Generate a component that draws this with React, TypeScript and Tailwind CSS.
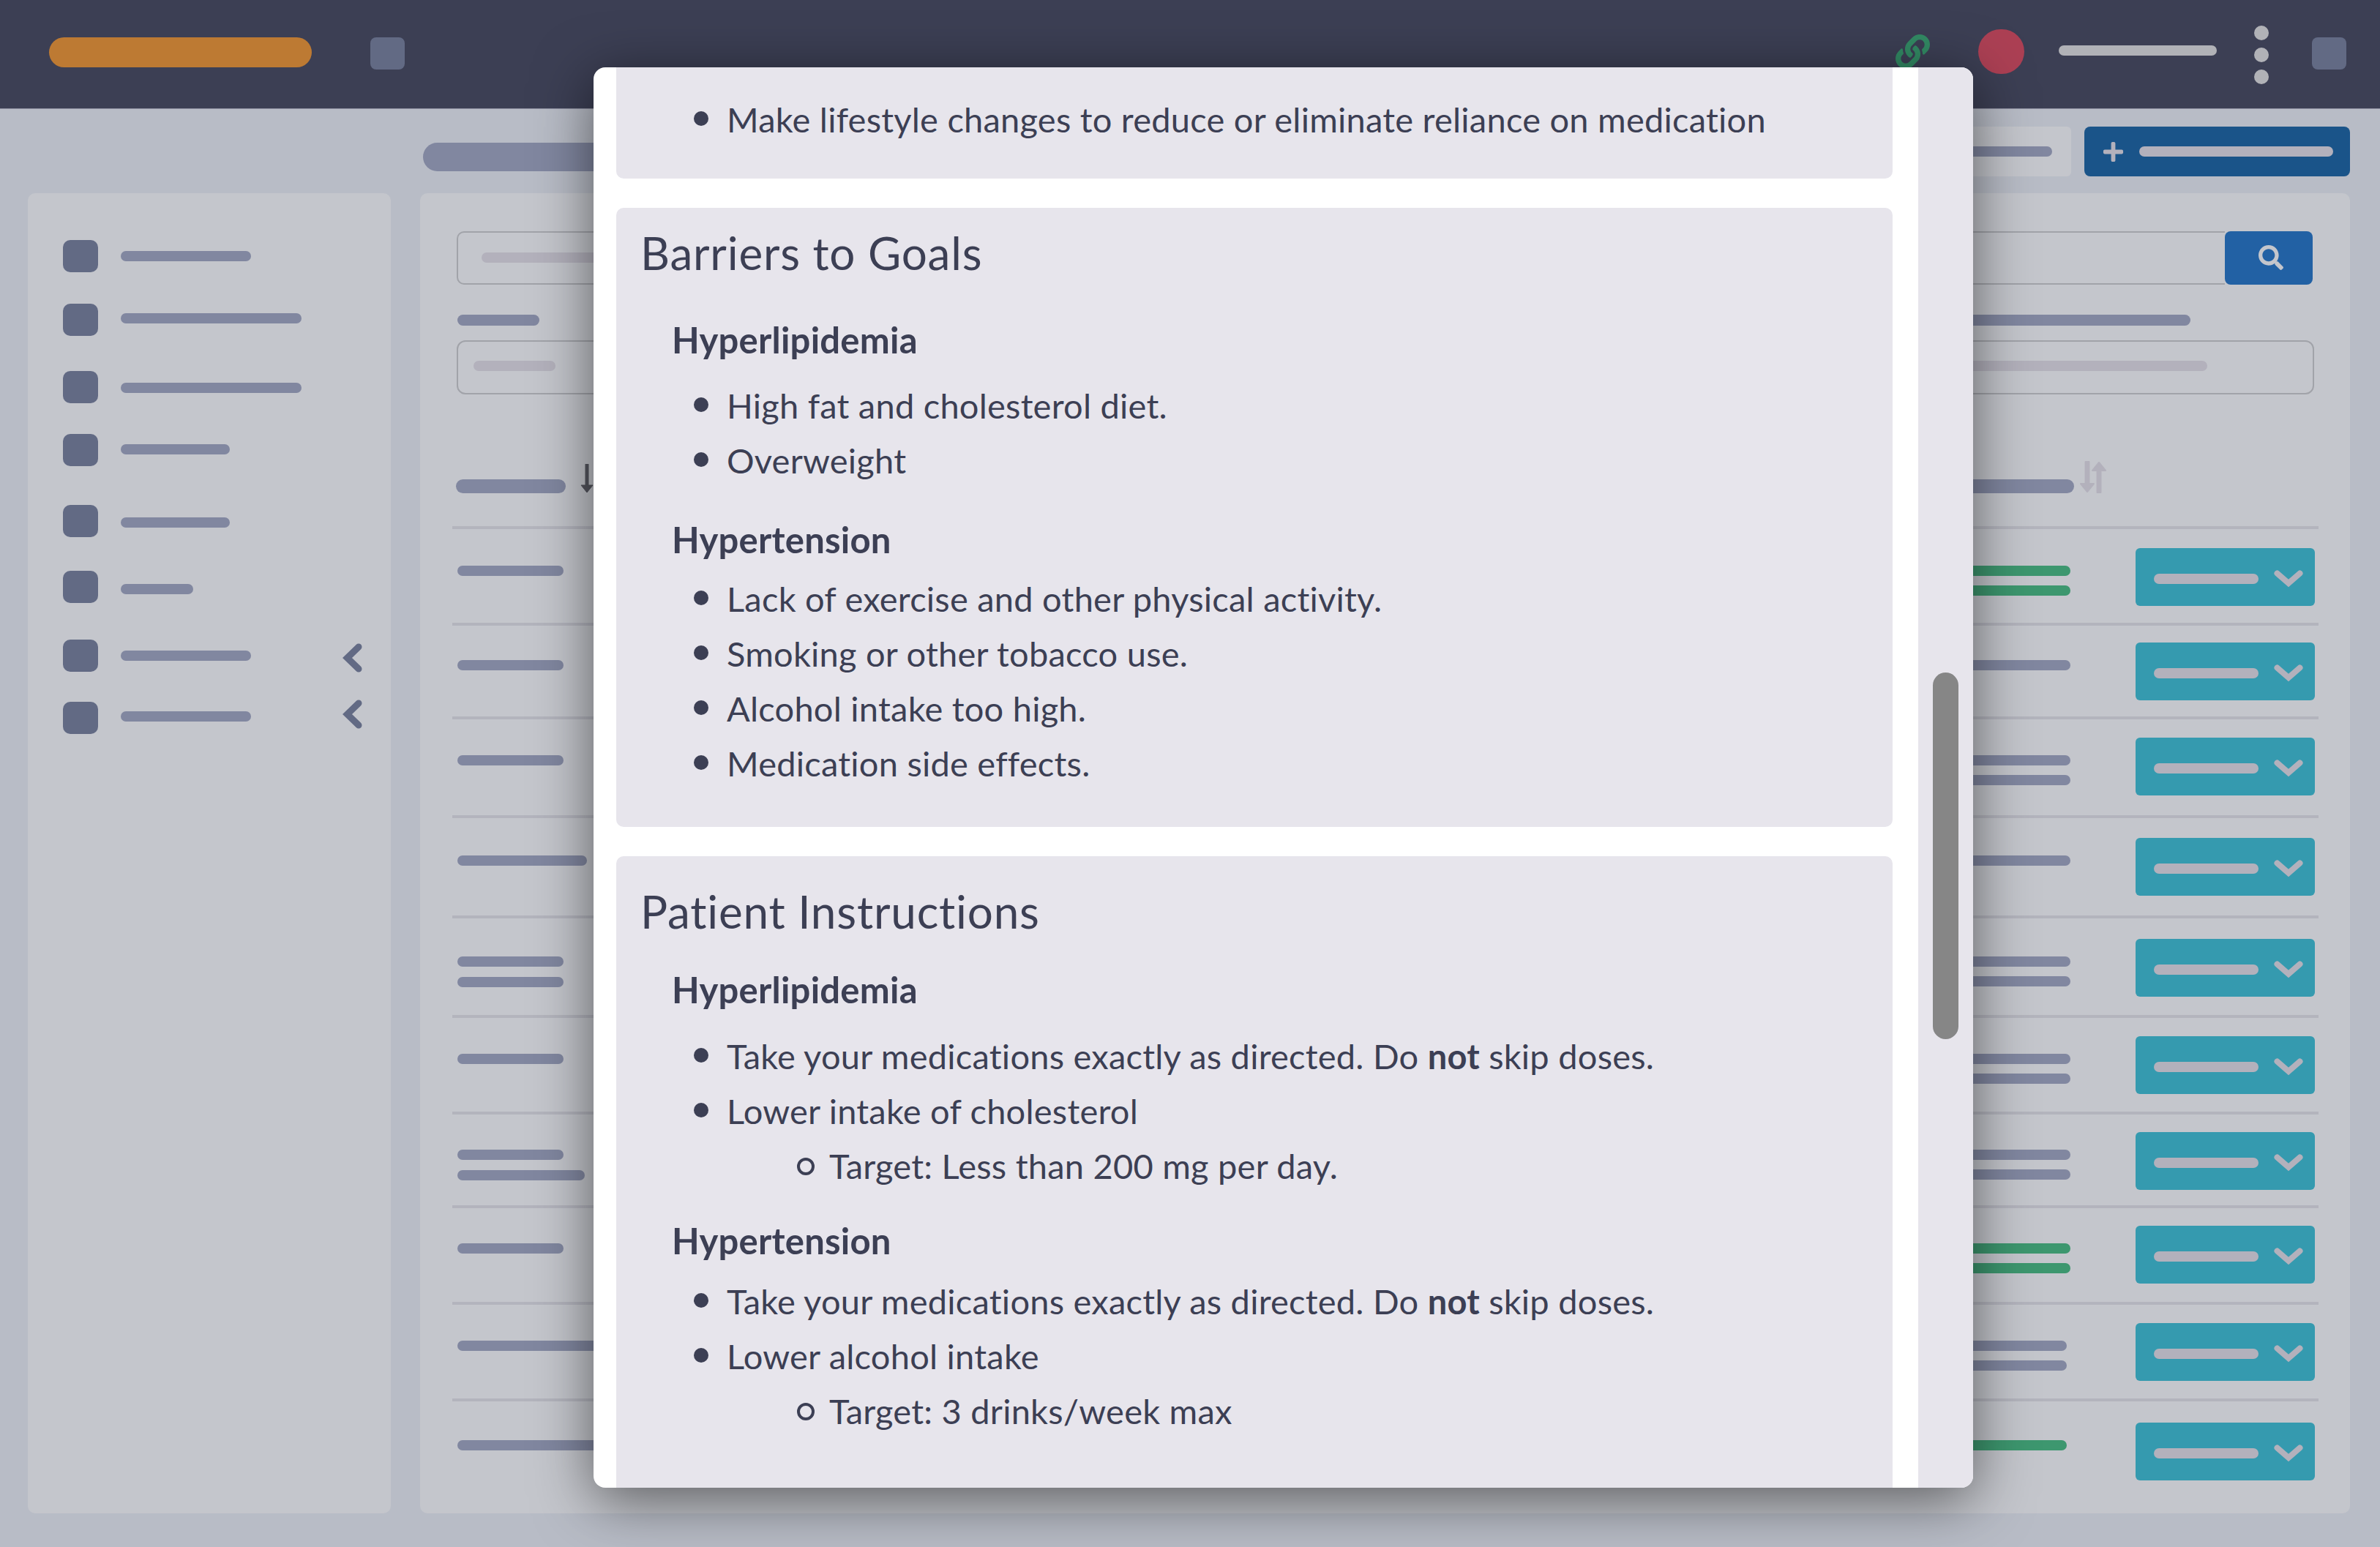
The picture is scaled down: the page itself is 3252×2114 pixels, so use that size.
import React from "react";
import { FaLink, FaSearch, FaPlus } from "react-icons/fa";

const navItems = [
  { row: "h-[87px]", bar: "w-[178px] mt-[15px]", chevron: "" },
  { row: "h-[92px]", bar: "w-[247px] mt-[13px]", chevron: "" },
  { row: "h-[86px]", bar: "w-[247px] mt-[16px]", chevron: "" },
  { row: "h-[97px]", bar: "w-[149px] mt-[14px]", chevron: "" },
  { row: "h-[90px]", bar: "w-[149px] mt-[17px]", chevron: "" },
  { row: "h-[94px]", bar: "w-[99px] mt-[18px]", chevron: "" },
  { row: "h-[85px]", bar: "w-[178px] mt-[15px]", chevron: "mt-[5px]" },
  { row: "h-[85px]", bar: "w-[178px] mt-[13px]", chevron: "-mt-[3px]" },
];

const tableRows = [
  { row: "h-[132px] pt-[26px]", left: ["w-[145px]"], right: ["w-[229px]", "w-[229px]"], green: true },
  { row: "h-[128px] pt-[23px]", left: ["w-[145px]"], right: ["w-[229px]"], green: false },
  { row: "h-[135px] pt-[25px]", left: ["w-[145px]"], right: ["w-[229px]", "w-[229px]"], green: false },
  { row: "h-[137px] pt-[27px]", left: ["w-[177px]"], right: ["w-[229px]"], green: false },
  { row: "h-[136px] pt-[28px]", left: ["w-[145px]", "w-[145px]"], right: ["w-[229px]", "w-[229px]"], green: false },
  { row: "h-[132px] pt-[25px]", left: ["w-[145px]"], right: ["w-[229px]", "w-[229px]"], green: false },
  { row: "h-[128px] pt-[24px]", left: ["w-[145px]", "w-[174px]"], right: ["w-[229px]", "w-[229px]"], green: false },
  { row: "h-[132px] pt-[24px]", left: ["w-[145px]"], right: ["w-[229px]", "w-[229px]"], green: true },
  { row: "h-[132px] pt-[25px]", left: ["w-[240px]"], right: ["w-[224px]", "w-[224px]"], green: false },
  { row: "h-[146px] pt-[29px]", left: ["w-[240px]"], right: ["w-[224px]"], green: true },
];

function Item({ children }: { children: React.ReactNode }) {
  return (
    <li className="flex items-center h-[75px] ml-[106px]">
      <span className="w-[20px] h-[20px] rounded-full bg-[#3c3f54] mr-[25px] -mt-[3px]" />
      <span>{children}</span>
    </li>
  );
}

function SubItem({ children }: { children: React.ReactNode }) {
  return (
    <li className="flex items-center h-[75px] ml-[247px]">
      <span className="w-[24px] h-[24px] rounded-full border-[4px] border-[#3c3f54] mr-[20px] mt-[2px]" />
      <span>{children}</span>
    </li>
  );
}

function CardTitle({ children }: { children: React.ReactNode }) {
  return <h4 className="ml-[33px] h-[91px] leading-[91px] text-[62px] font-normal tracking-[0.8px]">{children}</h4>;
}

function GroupTitle({ children, className }: { children: React.ReactNode; className: string }) {
  return <h5 className={`ml-[76px] h-[75px] leading-[75px] font-bold text-[49px] ${className}`}>{children}</h5>;
}

function ChevronLeft({ className }: { className: string }) {
  return (
    <svg viewBox="0 0 27 40" className={`ml-auto w-[27px] h-[40px] text-[#626a84] ${className}`} fill="none" stroke="currentColor">
      <path d="M22 5L6.5 20L22 35" strokeWidth="9" strokeLinecap="round" />
    </svg>
  );
}

function ChevronDown() {
  return (
    <svg viewBox="0 0 40 26" className="ml-auto w-[40px] h-[26px] text-[#b3b1bc] mt-[4px]" fill="none" stroke="currentColor">
      <path d="M4.5 5.5L20 19L35.5 5.5" strokeWidth="8" strokeLinecap="round" />
    </svg>
  );
}

function Sidebar() {
  return (
    <aside className="w-[496px] h-[1804px] mt-[91px] shrink-0 rounded-[10px] bg-[#c4c6cc] pt-[64px] pl-[48px] pr-[39px]">
      {navItems.map((item, i) => (
        <div key={i} className={`flex items-start ${item.row}`}>
          <div className="w-[48px] h-[44px] rounded-[10px] bg-[#626a84]" />
          <div className={`h-[14px] rounded-full bg-[#8187a0] ml-[31px] ${item.bar}`} />
          {item.chevron && <ChevronLeft className={item.chevron} />}
        </div>
      ))}
    </aside>
  );
}

function SortIcon() {
  return (
    <svg viewBox="0 0 36 44" className="w-[36px] h-[44px] text-[#b3b1bc]" fill="none" stroke="currentColor">
      <path d="M10 2V36" strokeWidth="7" strokeLinecap="round" />
      <path d="M1 31L10 42L19 31Z" fill="currentColor" strokeWidth="2" strokeLinejoin="round" />
      <path d="M26 42V8" strokeWidth="7" strokeLinecap="round" />
      <path d="M17 13L26 2L35 13Z" fill="currentColor" strokeWidth="2" strokeLinejoin="round" />
    </svg>
  );
}

function TablePanel() {
  return (
    <section className="mt-[23px] h-[1804px] rounded-[10px] bg-[#c4c6cc] pt-[52px]">
      <div className="flex ml-[50px] mr-[51px] h-[73px]">
        <div className="flex-1 flex items-center pl-[32px] border-2 border-r-0 border-[#a1a3a9] rounded-l-[10px]">
          <div className="w-[900px] h-[14px] rounded-full bg-[#b3b1bc] -mt-[2px]" />
        </div>
        <div className="w-[120px] flex items-center justify-center rounded-[8px] bg-[#2261a4]">
          <FaSearch className="w-[34px] h-[34px] ml-[6px] -mt-[2px] text-[#c4c6cc]" />
        </div>
      </div>
      <div className="flex ml-[50px] mr-[49px] mt-[41px] gap-[60px]">
        <div className="w-[1200px]">
          <div className="ml-[1px] w-[112px] h-[15px] rounded-full bg-[#8187a0]" />
          <div className="mt-[20px] h-[74px] border-2 border-[#a1a3a9] rounded-[12px] pl-[21px] pt-[26px]">
            <div className="w-[112px] h-[14px] rounded-full bg-[#b3b1bc]" />
          </div>
        </div>
        <div className="flex-1">
          <div className="mr-[169px] h-[15px] rounded-full bg-[#8187a0]" />
          <div className="mt-[20px] h-[74px] border-2 border-[#a1a3a9] rounded-[12px] pl-[21px] pr-[144px] pt-[26px]">
            <div className="h-[14px] rounded-full bg-[#b3b1bc]" />
          </div>
        </div>
      </div>

      <div className="ml-[44px] mr-[43px]">
        <div className="flex items-end h-[184px] pb-[45px] pl-[5px] border-b-[4px] border-[#b3b4bd]">
          <div className="w-[150px] h-[19px] rounded-full bg-[#8187a0]" />
          <svg viewBox="0 0 18 40" className="ml-[20px] w-[18px] h-[40px] text-[#55565f]" fill="none" stroke="currentColor">
            <path d="M9 1V32" strokeWidth="5" strokeLinecap="round" />
            <path d="M1 29L9 39L17 29Z" fill="currentColor" strokeWidth="1" strokeLinejoin="round" />
          </svg>
          <div className="ml-auto w-[240px] h-[19px] rounded-full bg-[#8187a0]" />
          <div className="ml-[8px] mr-[290px]">
            <SortIcon />
          </div>
        </div>
        {tableRows.map((r, i) => (
          <div key={i} className={`flex items-start pl-[7px] pr-[5px] ${i < 9 ? "border-b-[4px] border-[#b3b4bd]" : ""} ${r.row}`}>
            <div className="flex flex-col gap-[14px] mt-6">
              {r.left.map((w, j) => (
                <div key={j} className={`h-[14px] rounded-full bg-[#8187a0] ${w}`} />
              ))}
            </div>
            <div className="ml-auto w-[229px] flex flex-col gap-[13px] mt-6">
              {r.right.map((w, j) => (
                <div key={j} className={`h-[14px] rounded-full ${w} ${r.green ? "bg-[#3d976f]" : "bg-[#8187a0]"}`} />
              ))}
            </div>
            <div className="ml-[89px] w-[245px] h-[79px] rounded-[6px] bg-[#359aaf] flex items-center pl-[25px] pr-[16px]">
              <div className="w-[143px] h-[14px] rounded-full bg-[#b3b1bc] mt-[5px]" />
              <ChevronDown />
            </div>
          </div>
        ))}
      </div>
    </section>
  );
}

function Modal() {
  return (
    <div className="absolute left-[811px] top-[92px] w-[1885px] h-[1941px] flex overflow-hidden rounded-[16px] bg-white text-[#3c3f54] text-[47px] tracking-[0.23px] shadow-[0_16px_80px_rgba(0,0,0,0.55)] font-['Lato',sans-serif]">
      <div className="w-[1810px] pl-[31px] pr-[35px]">
        <div className="h-[151.5px] pt-[33.5px] rounded-b-[10px] bg-[#e7e5ec]">
          <ul>
            <Item>Make lifestyle changes to reduce or eliminate reliance on medication</Item>
          </ul>
        </div>

        <div className="mt-[40px] h-[846px] pt-[16px] rounded-[10px] bg-[#e7e5ec]">
          <CardTitle>Barriers to Goals</CardTitle>
          <GroupTitle className="mt-[36px]">Hyperlipidemia</GroupTitle>
          <ul className="mt-[15px]">
            <Item>High fat and cholesterol diet.</Item>
            <Item>Overweight</Item>
          </ul>
          <GroupTitle className="mt-[33px]">Hypertension</GroupTitle>
          <ul className="mt-[6px]">
            <Item>Lack of exercise and other physical activity.</Item>
            <Item>Smoking or other tobacco use.</Item>
            <Item>Alcohol intake too high.</Item>
            <Item>Medication side effects.</Item>
          </ul>
        </div>

        <div className="mt-[40px] h-[900px] pt-[30px] rounded-[10px] bg-[#e7e5ec]">
          <CardTitle>Patient Instructions</CardTitle>
          <GroupTitle className="mt-[24px]">Hyperlipidemia</GroupTitle>
          <ul className="mt-[16px]">
            <Item>
              Take your medications exactly as directed. Do <b className="font-bold">not</b> skip doses.
            </Item>
            <Item>Lower intake of cholesterol</Item>
            <SubItem>Target: Less than 200 mg per day.</SubItem>
          </ul>
          <GroupTitle className="mt-[27px]">Hypertension</GroupTitle>
          <ul className="mt-[8px]">
            <Item>
              Take your medications exactly as directed. Do <b className="font-bold">not</b> skip doses.
            </Item>
            <Item>Lower alcohol intake</Item>
            <SubItem>Target: 3 drinks/week max</SubItem>
          </ul>
        </div>
      </div>
      <div className="w-[75px] bg-[#e7e5ec] pl-[20px] pt-[827px]">
        <div className="w-[35px] h-[501px] rounded-full bg-[#868686]" />
      </div>
    </div>
  );
}

export default function App() {
  return (
    <div className="relative w-[3252px] h-[2114px] overflow-hidden bg-[#b8bcc6]">
      <header className="h-[149px] bg-[#3c3f54] border-b border-[#8d8fa0] flex items-start relative">
        <div className="ml-[67px] mt-[51px] w-[359px] h-[41px] rounded-full bg-[#bd7a33]" />
        <div className="ml-[80px] mt-[51px] w-[47px] h-[44px] rounded-[8px] bg-[#626a84]" />
        <FaLink className="ml-auto mt-[47px] w-[47px] h-[47px] text-[#328a64]" />
        <div className="ml-[66px] mt-[40px] w-[63px] h-[61px] rounded-full bg-[#ac4054]" />
        <div className="ml-[47px] mt-[62px] w-[216px] h-[14px] rounded-full bg-[#b1b2b7]" />
        <div className="ml-[51px] mt-[35px] flex flex-col gap-[10px]">
          <div className="w-[20px] h-[20px] rounded-full bg-[#b1b2b7]" />
          <div className="w-[20px] h-[20px] rounded-full bg-[#b1b2b7]" />
          <div className="w-[20px] h-[20px] rounded-full bg-[#b1b2b7]" />
        </div>
        <div className="ml-[59px] mr-[46px] mt-[51px] w-[47px] h-[44px] rounded-[8px] bg-[#626a84]" />
      </header>

      <div className="flex pl-[38px] pr-[41px] gap-[40px] pt-[24px]">
        <Sidebar />
        <main className="flex-1">
          <div className="flex items-start h-[68px]">
            <div className="ml-[4px] mt-[22px] w-[500px] h-[39px] rounded-full bg-[#8187a0]" />
            <div className="ml-auto w-[300px] h-[68px] rounded-[6px] bg-[#c4c6cc] flex items-center justify-end pr-[26px]">
              <div className="w-[200px] h-[14px] rounded-full bg-[#8187a0]" />
            </div>
            <div className="ml-[18px] w-[363px] h-[68px] rounded-[8px] bg-[#1a5489] flex items-center pl-[24px] pr-[23px]">
              <FaPlus className="w-[31px] h-[31px] text-[#b3b1bc]" />
              <div className="ml-[20px] flex-1 h-[14px] rounded-full bg-[#b3b1bc]" />
            </div>
          </div>
          <TablePanel />
        </main>
      </div>

      <Modal />
    </div>
  );
}
